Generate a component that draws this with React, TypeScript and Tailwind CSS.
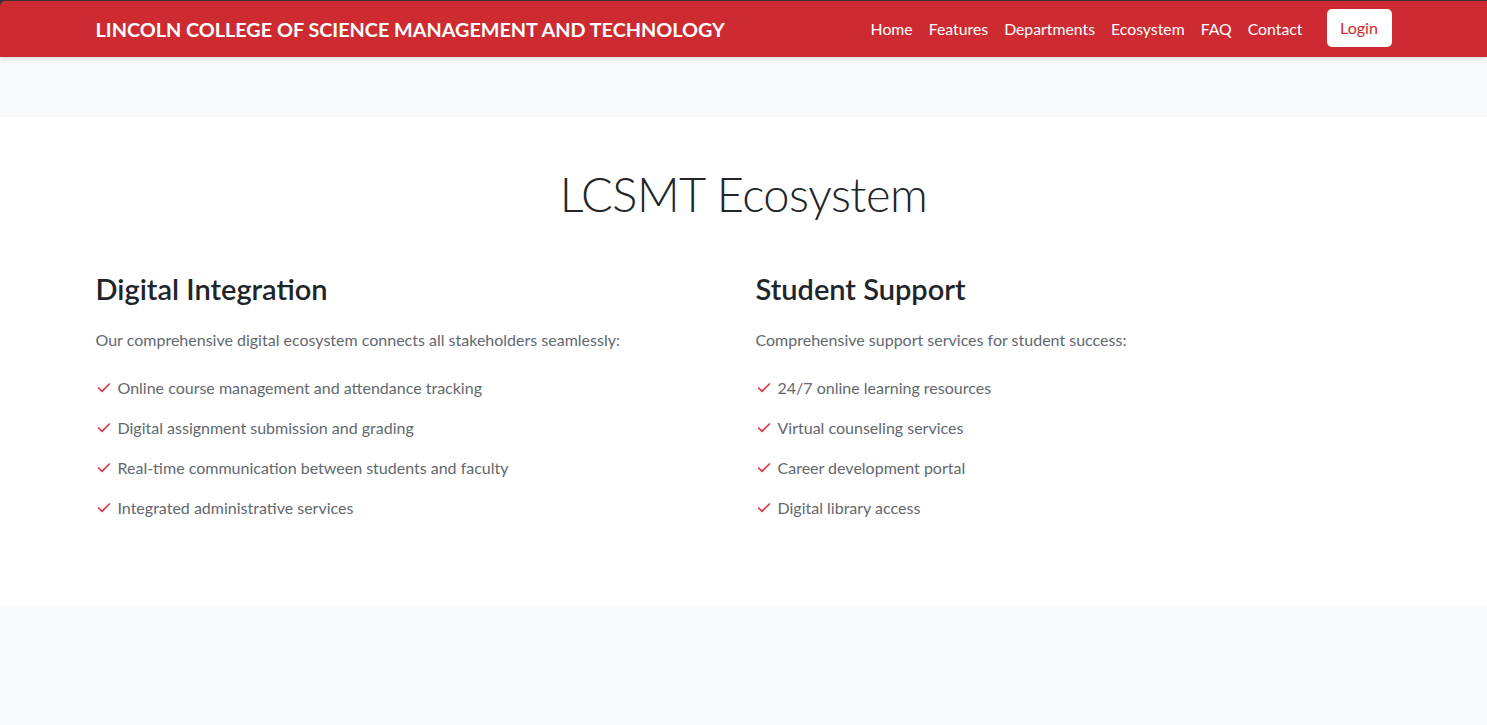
import { Check } from 'lucide-react'

const navLinks = ['Home', 'Features', 'Departments', 'Ecosystem', 'FAQ', 'Contact']

const columns = [
  {
    title: 'Digital Integration',
    intro: 'Our comprehensive digital ecosystem connects all stakeholders seamlessly:',
    items: [
      'Online course management and attendance tracking',
      'Digital assignment submission and grading',
      'Real-time communication between students and faculty',
      'Integrated administrative services',
    ],
  },
  {
    title: 'Student Support',
    intro: 'Comprehensive support services for student success:',
    items: [
      '24/7 online learning resources',
      'Virtual counseling services',
      'Career development portal',
      'Digital library access',
    ],
  },
]

function App() {
  return (
    <div className="min-h-screen bg-[#f8f9fa] font-['Lato','Liberation_Sans',sans-serif]">
      {/* Navbar */}
      <div className="bg-[#333] pt-px">
        <nav className="bg-[#cd2b31] rounded-tl-[5px] h-14 shadow-[0_2px_4px_rgba(0,0,0,0.12)] relative">
          <div className="max-w-[1320px] mx-auto px-3 h-full flex items-center justify-between">
            <a className="text-white font-bold text-[19.8px] uppercase mt-[1px]">
              Lincoln College of Science Management and Technology
            </a>
            <div className="flex items-center">
              <ul className="flex items-center">
                {navLinks.map((link) => (
                  <li key={link}>
                    <a className="text-white text-[15.8px] px-2 py-2 block">{link}</a>
                  </li>
                ))}
              </ul>
              <button className="ml-4 mb-[2px] bg-white text-[#cd2b31] text-[16px] rounded-[5px] w-[65px] h-[38px] flex items-center justify-center">
                Login
              </button>
            </div>
          </div>
        </nav>
      </div>

      <div className="h-[60px]" />

      {/* Ecosystem */}
      <section className="bg-white pt-[49px] h-[490px]">
        <div className="max-w-[1320px] mx-auto px-3">
          <h2 className="text-center text-[47px] font-light tracking-[-0.5px] text-[#212529] leading-[1.2] mb-[50px]">
            LCSMT Ecosystem
          </h2>
          <div className="grid grid-cols-2 gap-6">
            {columns.map((col) => (
              <div key={col.title}>
                <h3 className="text-[29px] font-semibold text-[#212529] leading-[1.2] mb-[21px]">{col.title}</h3>
                <p className="text-[16px] text-[#62686e] leading-6 mb-[24px]">{col.intro}</p>
                <ul className="flex flex-col gap-4">
                  {col.items.map((item) => (
                    <li key={item} className="flex items-center text-[16px] text-[#62686e] leading-6">
                      <Check className="w-4 h-4 text-[#dc3545] mr-[6px]" strokeWidth={2.5} />
                      {item}
                    </li>
                  ))}
                </ul>
              </div>
            ))}
          </div>
        </div>
      </section>
    </div>
  )
}

export default App
